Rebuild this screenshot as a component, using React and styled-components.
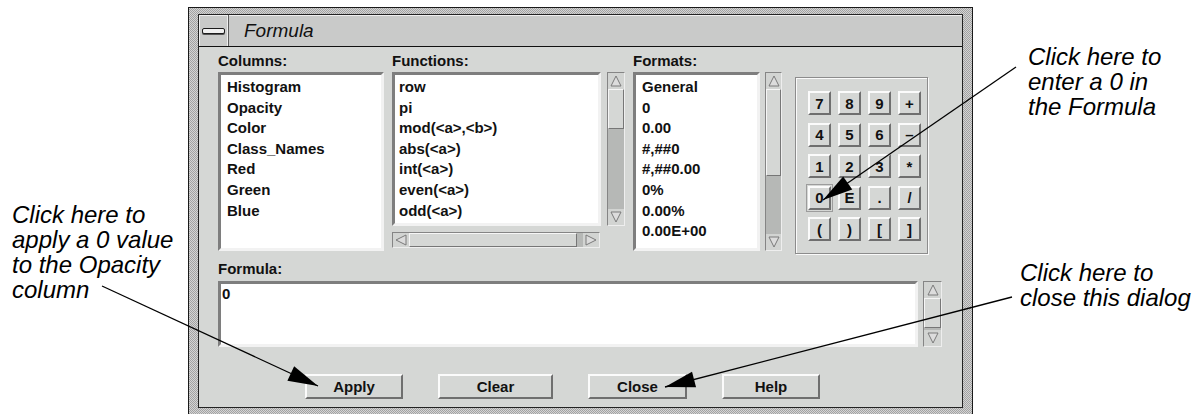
import React from 'react';
import styled, { createGlobalStyle } from 'styled-components';

const GlobalStyle = createGlobalStyle`
  html, body {
    margin: 0;
    padding: 0;
    background: #fff;
  }
  body {
    width: 1202px;
    height: 414px;
    overflow: hidden;
    font-family: "Liberation Sans", Arial, sans-serif;
  }
`;

const columns = ['Histogram', 'Opacity', 'Color', 'Class_Names', 'Red', 'Green', 'Blue'];
const functions = ['row', 'pi', 'mod(<a>,<b>)', 'abs(<a>)', 'int(<a>)', 'even(<a>)', 'odd(<a>)'];
const formats = ['General', '0', '0.00', '#,##0', '#,##0.00', '0%', '0.00%', '0.00E+00'];
const keys = ['7', '8', '9', '+', '4', '5', '6', '–', '1', '2', '3', '*', '0', 'E', '.', '/', '(', ')', '[', ']'];
const buttons = [
  { label: 'Apply', w: 98 },
  { label: 'Clear', w: 115 },
  { label: 'Close', w: 99 },
  { label: 'Help', w: 98 },
];

// callout lines, page coordinates
const callouts = [
  { from: [102, 286], to: [318, 386] },
  { from: [1016, 67], to: [823, 200] },
  { from: [1012, 297], to: [665, 387] },
];

const Page = styled.div`
  position: relative;
  display: flex;
  width: 1202px;
  height: 414px;
  overflow: hidden;
`;

const LeftSide = styled.div`
  flex: none;
  width: 188px;
  box-sizing: border-box;
  padding: 202px 0 0 12px;
`;

const RightSide = styled.div`
  flex: 1;
  display: flex;
  flex-direction: column;
  padding-left: 55px;
`;

const Note = styled.p`
  margin: ${(p) => p.$top || 0}px 0 0 ${(p) => p.$shift || 0}px;
  font: italic 24px/25px "Liberation Sans", Arial, sans-serif;
  color: #000;
  white-space: nowrap;
`;

const Window = styled.div`
  flex: none;
  width: 785px;
  height: 430px;
  margin-top: 7px;
  box-sizing: border-box;
  border: 1px solid #1a1a1a;
  padding: 6px 9px 9px;
  background: repeating-conic-gradient(#a2a2a2 0 25%, #d4d4d4 0 50%) 0 0 / 2px 2px;
`;

const Inner = styled.div`
  height: 394px;
  box-sizing: border-box;
  border: 1px solid #222;
  background: #d5d7d5;
  display: flex;
  flex-direction: column;
`;

const TitleBar = styled.div`
  flex: none;
  height: 32px;
  box-sizing: border-box;
  display: flex;
  align-items: stretch;
  background: #c9cac9;
  border-bottom: 1px solid #111;
`;

const MenuBox = styled.div`
  width: 29px;
  display: grid;
  place-items: center;
  border-right: 1px solid #5e5e5e;
  box-shadow: inset -1px 0 0 #efefef, inset 1px 1px 0 #efefef;
`;

const MenuBar = styled.div`
  width: 21px;
  height: 4px;
  border: 1px solid #1c1c1c;
  border-radius: 2px;
  background: #f0f0f0;
  box-shadow: 0 1px 0 #555;
`;

const Title = styled.div`
  display: flex;
  align-items: center;
  padding-left: 15px;
  font: italic 19px "Liberation Sans", Arial, sans-serif;
  color: #111;
  box-shadow: inset 0 1px 0 #efefef;
  flex: 1;
`;

const Body = styled.div`
  flex: 1;
  padding: 6px 20px 0 19px;
  display: flex;
  flex-direction: column;
  font: bold 15px "Liberation Sans", Arial, sans-serif;
  color: #111;
`;

const TopRow = styled.div`
  display: flex;
  align-items: flex-start;
  gap: 8px;
  height: 201px;
`;

const Group = styled.div`
  display: flex;
  flex-direction: column;
`;

const Label = styled.div`
  line-height: 15px;
  margin-bottom: 4px;
  margin-top: ${(p) => p.$top || 0}px;
`;

const Row = styled.div`
  display: flex;
  align-items: flex-start;
  gap: ${(p) => p.$gap}px;
`;

const Stack = styled.div`
  display: flex;
  flex-direction: column;
  gap: 6px;
`;

const ListBox = styled.div`
  flex: none;
  width: ${(p) => p.$w}px;
  height: ${(p) => p.$h}px;
  box-sizing: border-box;
  border: 3px solid;
  border-color: #7e7e7e #f2f2f2 #f2f2f2 #7e7e7e;
  background: #fff;
  padding: 2px 0 0 ${(p) => p.$pad}px;
  overflow: hidden;
`;

const Item = styled.div`
  line-height: 20.6px;
  white-space: nowrap;
`;

const Scroll = styled.div`
  flex: none;
  display: flex;
  flex-direction: ${(p) => (p.$horizontal ? 'row' : 'column')};
  width: ${(p) => p.$w}px;
  height: ${(p) => p.$h}px;
  box-sizing: border-box;
  border: 1px solid;
  border-color: #858585 #eeeeee #eeeeee #858585;
  background: #b6b8b6;
`;

const StepBtn = styled.div`
  flex: none;
  width: ${(p) => (p.$horizontal ? '16px' : 'auto')};
  height: ${(p) => (p.$horizontal ? 'auto' : '16px')};
  display: grid;
  place-items: center;
  background: #d2d4d2;
`;

const Thumb = styled.div`
  flex: none;
  ${(p) => (p.$horizontal ? `width: ${p.$size}px;` : `height: ${p.$size}px;`)}
  box-sizing: border-box;
  border: 1px solid;
  border-color: #f6f6f6 #767676 #767676 #f6f6f6;
  background: #d5d7d5;
`;

const Track = styled.div`
  flex: 1;
`;

const Keypad = styled.div`
  flex: none;
  width: 133px;
  height: 177px;
  margin: 24px 0 0 5px;
  box-sizing: border-box;
  padding: 13px 0 0 12px;
  border: 1px solid #8c8c8c;
  box-shadow: 1px 1px 0 #fafafa, inset 1px 1px 0 #fafafa;
  display: grid;
  grid-template-columns: repeat(4, 23px);
  grid-auto-rows: 24px;
  column-gap: 7px;
  row-gap: 7.5px;
`;

const Key = styled.div`
  box-sizing: border-box;
  display: grid;
  place-items: center;
  border: 2px solid;
  border-color: #fbfbfb #6f6f6f #6f6f6f #fbfbfb;
  background: #d5d7d5;
  font-size: 15px;
  outline: ${(p) => (p.$focus ? '1px solid #9c9c9c' : 'none')};
  outline-offset: 1px;
`;

const FormulaRow = styled.div`
  display: flex;
  align-items: flex-start;
  gap: 5px;
`;

const FormulaBox = styled.div`
  width: 700px;
  height: 66px;
  box-sizing: border-box;
  border: 3px solid;
  border-color: #7e7e7e #f2f2f2 #f2f2f2 #7e7e7e;
  background: #fff;
  padding-left: 1px;
  line-height: 20px;
`;

const ButtonRow = styled.div`
  display: flex;
  gap: 35px;
  margin-top: 27px;
  padding-left: 87px;
`;

const Button = styled.div`
  width: ${(p) => p.$w}px;
  height: 25px;
  box-sizing: border-box;
  display: grid;
  place-items: center;
  border: 2px solid;
  border-color: #fbfbfb #6f6f6f #6f6f6f #fbfbfb;
  background: #d5d7d5;
  font-size: 15px;
`;

const Overlay = styled.svg`
  position: absolute;
  left: 0;
  top: 0;
  pointer-events: none;
`;

const Tri = ({ dir }) => {
  const pts = {
    up: '6,1 11,11 1,11',
    down: '1,1 11,1 6,11',
    left: '1,6 11,1 11,11',
    right: '1,1 11,6 1,11',
  }[dir];
  return (
    <svg width="12" height="12" viewBox="0 0 12 12">
      <polygon points={pts} fill="#dcdcdc" stroke="#7a7a7a" strokeWidth="1" />
    </svg>
  );
};

const ScrollBar = ({ horizontal, w, h, thumb }) => (
  <Scroll $horizontal={horizontal} $w={w} $h={h}>
    <StepBtn $horizontal={horizontal}>
      <Tri dir={horizontal ? 'left' : 'up'} />
    </StepBtn>
    <Thumb $horizontal={horizontal} $size={thumb} />
    <Track />
    <StepBtn $horizontal={horizontal}>
      <Tri dir={horizontal ? 'right' : 'down'} />
    </StepBtn>
  </Scroll>
);

function head([x1, y1], [x2, y2], len = 30, half = 8) {
  const dx = x2 - x1;
  const dy = y2 - y1;
  const d = Math.hypot(dx, dy);
  const ux = dx / d;
  const uy = dy / d;
  const bx = x2 - ux * len;
  const by = y2 - uy * len;
  return `${x2},${y2} ${bx - uy * half},${by + ux * half} ${bx + uy * half},${by - ux * half}`;
}

export default function App() {
  return (
    <>
      <GlobalStyle />
      <Page>
        <LeftSide>
          <Note>
            Click here to
            <br />
            apply a 0 value
            <br />
            to the Opacity
            <br />
            column
          </Note>
        </LeftSide>

        <Window>
          <Inner>
            <TitleBar>
              <MenuBox>
                <MenuBar />
              </MenuBox>
              <Title>Formula</Title>
            </TitleBar>

            <Body>
              <TopRow>
                <Group>
                  <Label>Columns:</Label>
                  <ListBox $w={166} $h={179} $pad={6}>
                    {columns.map((c) => (
                      <Item key={c}>{c}</Item>
                    ))}
                  </ListBox>
                </Group>

                <Group>
                  <Label>Functions:</Label>
                  <Row $gap={6}>
                    <Stack>
                      <ListBox $w={209} $h={154} $pad={4}>
                        {functions.map((f) => (
                          <Item key={f}>{f}</Item>
                        ))}
                      </ListBox>
                      <ScrollBar horizontal w={208} h={16} thumb={168} />
                    </Stack>
                    <ScrollBar w={18} h={154} thumb={40} />
                  </Row>
                </Group>

                <Group>
                  <Label>Formats:</Label>
                  <Row $gap={5}>
                    <ListBox $w={127} $h={179} $pad={6}>
                      {formats.map((f) => (
                        <Item key={f}>{f}</Item>
                      ))}
                    </ListBox>
                    <ScrollBar w={17} h={179} thumb={87} />
                  </Row>
                </Group>

                <Keypad>
                  {keys.map((k) => (
                    <Key key={k} $focus={k === '0'}>
                      {k}
                    </Key>
                  ))}
                </Keypad>
              </TopRow>

              <Label $top={7} style={{ marginBottom: 5 }}>
                Formula:
              </Label>
              <FormulaRow>
                <FormulaBox>0</FormulaBox>
                <ScrollBar w={19} h={66} thumb={30} />
              </FormulaRow>

              <ButtonRow>
                {buttons.map((b) => (
                  <Button key={b.label} $w={b.w}>
                    {b.label}
                  </Button>
                ))}
              </ButtonRow>
            </Body>
          </Inner>
        </Window>

        <RightSide>
          <Note $top={44}>
            Click here to
            <br />
            enter a 0 in
            <br />
            the Formula
          </Note>
          <Note $top={141} $shift={-8}>
            Click here to
            <br />
            close this dialog
          </Note>
        </RightSide>

        <Overlay width="1202" height="414" viewBox="0 0 1202 414">
          {callouts.map((c, i) => (
            <g key={i}>
              <line x1={c.from[0]} y1={c.from[1]} x2={c.to[0]} y2={c.to[1]} stroke="#000" strokeWidth="1.3" />
              <polygon points={head(c.from, c.to)} fill="#000" />
            </g>
          ))}
        </Overlay>
      </Page>
    </>
  );
}
